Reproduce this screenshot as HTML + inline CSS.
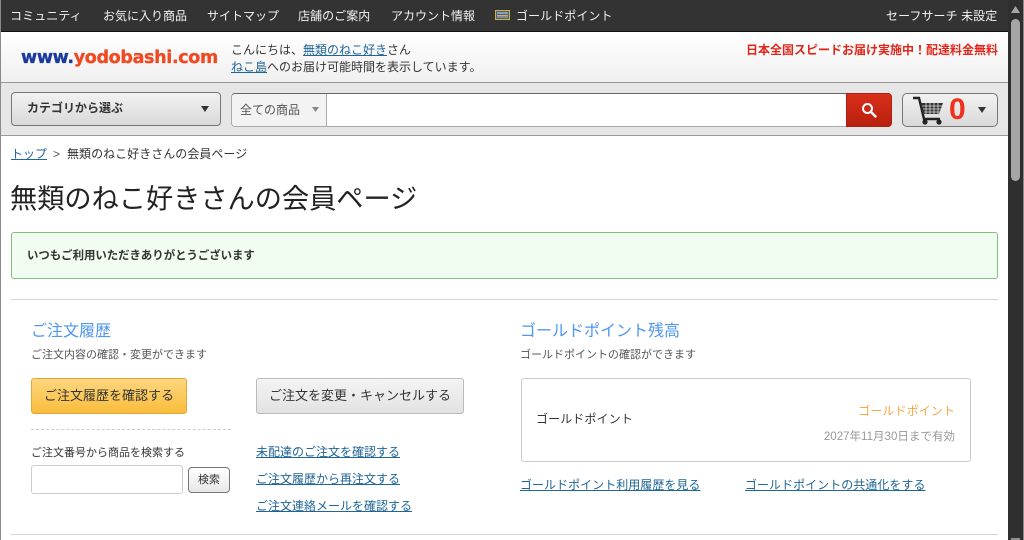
<!DOCTYPE html>
<html lang="ja"><head><meta charset="utf-8"><title>会員ページ</title>
<style>
*{box-sizing:border-box}
html,body{margin:0;padding:0}
body{width:1024px;height:540px;overflow:hidden;position:relative;background:#fff;font-family:"Liberation Sans","Noto Sans CJK JP",sans-serif;font-size:12px;color:#333}
.a{position:absolute;white-space:nowrap;line-height:18px}
a,.l{color:#1f6596;text-decoration:underline}
.nav{color:#f2f2f2;font-size:12px;top:7px}
</style></head><body>
<div class="a" style="left:0;top:0;width:1px;height:540px;background:#8a8a8a;z-index:5"></div>
<!-- top bar -->
<div class="a" style="left:0;top:0;width:1008px;height:32px;background:#333;border-bottom:1px solid #111"></div>
<div class="a nav" style="left:10px;letter-spacing:.1px">コミュニティ</div>
<div class="a nav" style="left:103px">お気に入り商品</div>
<div class="a nav" style="left:207px">サイトマップ</div>
<div class="a nav" style="left:298px;letter-spacing:.05px">店舗のご案内</div>
<div class="a nav" style="left:391px">アカウント情報</div>
<svg class="a" style="left:495px;top:10px" width="15" height="10"><rect x=".5" y=".5" width="14" height="9" fill="#55606f" stroke="#d2b23f"/><rect x="2" y="2" width="11" height="2" fill="#7f9fd0"/><rect x="2" y="5" width="11" height="1.5" fill="#cdb56a"/><rect x="2" y="7" width="11" height="1" fill="#6f88b8"/></svg>
<div class="a nav" style="left:516px;letter-spacing:.07px">ゴールドポイント</div>
<div class="a nav" style="left:886px;letter-spacing:.07px">セーフサーチ 未設定</div>
<!-- header -->
<div class="a" style="left:1px;top:32px;width:1007px;height:51px;background:linear-gradient(#fff,#f0f0f0);border-bottom:1px solid #9a9a9a"></div>
<div class="a" style="left:21px;top:47px;font:bold 17.5px/22px 'DejaVu Sans',sans-serif;letter-spacing:-.33px;color:#f04a23;-webkit-text-stroke:.35px"><span style="color:#1a3a9c">www.</span>yodobashi.com</div>
<div class="a" style="left:231px;top:41px">こんにちは、<a>無類のねこ好き</a>さん</div>
<div class="a" style="left:231px;top:58px"><a>ねこ島</a>へのお届け可能時間を表示しています。</div>
<div class="a" style="right:26px;top:41px;color:#e0261a;font-weight:bold">日本全国スピードお届け実施中！配達料金無料</div>
<!-- search bar -->
<div class="a" style="left:1px;top:83px;width:1007px;height:53px;background:#e6e6e6;border-bottom:1px solid #9a9a9a"></div>
<div class="a" style="left:11px;top:92px;width:210px;height:34px;border:1px solid #777;border-radius:4px;background:linear-gradient(#f2f2f2,#d9d9d9)"></div>
<div class="a" style="left:27px;top:99px;font-weight:bold;color:#333">カテゴリから選ぶ</div>
<svg class="a" style="left:201px;top:106px" width="8" height="6"><path d="M0 0H8L4 6Z" fill="#333"/></svg>
<div class="a" style="left:231px;top:93px;width:616px;height:34px;background:#fff;border:1px solid #aaa;border-top:1px solid #666;border-right:0;border-radius:4px 0 0 4px"></div>
<div class="a" style="left:232px;top:94px;width:95px;height:32px;background:#f3f3f3;border-right:1px solid #aaa;border-radius:4px 0 0 4px"></div>
<div class="a" style="left:240px;top:101px;color:#555">全ての商品</div>
<svg class="a" style="left:312px;top:107px" width="7" height="5"><path d="M0 0H7L3.5 5Z" fill="#888"/></svg>
<div class="a" style="left:846px;top:93px;width:46px;height:34px;border:1px solid #a8200f;border-radius:0 4px 4px 0;background:linear-gradient(#d9301a,#b8200e)"></div>
<svg class="a" style="left:860px;top:101px" width="18" height="18"><circle cx="7.5" cy="7.5" r="4.5" fill="none" stroke="#fff" stroke-width="2"/><path d="M11 11L15.5 15.5" stroke="#fff" stroke-width="2.4" stroke-linecap="round"/></svg>
<div class="a" style="left:902px;top:93px;width:96px;height:34px;border:1px solid #777;border-radius:5px;background:linear-gradient(#f2f2f2,#d9d9d9)"></div>
<svg class="a" style="left:912px;top:96px" width="34" height="29"><path d="M1 2H7L12 23H28" fill="none" stroke="#222" stroke-width="2.4"/><path d="M9 7H31L27 18H11Z" fill="#333"/><path d="M10 10H30M11 13H29M12 16H28M14 7V18M18 7V18M22 7V18M26 7V18" stroke="#ddd" stroke-width=".8"/><circle cx="13" cy="26" r="2.6" fill="#222"/><circle cx="27" cy="26" r="2.6" fill="#222"/></svg>
<div class="a" style="left:949px;top:94px;font:bold 30px/32px 'Liberation Sans',sans-serif;color:#f0301a">0</div>
<svg class="a" style="left:978px;top:107px" width="8" height="6"><path d="M0 0H8L4 6Z" fill="#333"/></svg>
<!-- scrollbar -->
<div class="a" style="left:1008px;top:0;width:16px;height:540px;background:#2f2f2f;border-right:1px solid #8a8a8a"></div>
<svg class="a" style="left:1011px;top:6px" width="9" height="7"><path d="M0 7L4.5 0L9 7Z" fill="#a6a6a6"/></svg>
<div class="a" style="left:1011px;top:19px;width:9px;height:162px;background:#a6a6a6;border-radius:5px"></div>
<div class="a" style="left:1011px;top:538px;width:9px;height:2px;background:#8f8f8f"></div>
<!-- breadcrumb -->
<div class="a" style="left:11px;top:145px"><a>トップ</a><span style="margin:0 7px 0 6px;color:#555">&gt;</span><span style="letter-spacing:.03px">無類のねこ好きさんの会員ページ</span></div>
<div class="a" style="left:10px;top:181px;font-size:27.2px;line-height:36px;color:#222">無類のねこ好きさんの会員ページ</div>
<!-- message -->
<div class="a" style="left:11px;top:232px;width:987px;height:47px;background:#f0fdf0;border:1px solid #7fc27a;border-radius:3px"></div>
<div class="a" style="left:27px;top:247px;font-size:11.4px;font-weight:bold;color:#333">いつもご利用いただきありがとうございます</div>
<div class="a" style="left:11px;top:299px;width:987px;height:1px;background:#d4d4d4"></div>
<!-- left column -->
<div class="a" style="left:31px;top:323px;font-size:16px;line-height:18px;color:#4f97ef">ご注文履歴</div>
<div class="a" style="left:31px;top:346px;font-size:11px;color:#555">ご注文内容の確認・変更ができます</div>
<div class="a" style="left:31px;top:378px;width:156px;height:36px;border:1px solid #e0a83a;border-radius:3px;background:linear-gradient(#fdd67e,#f9bd3c);text-align:center;line-height:34px;font-size:13px;color:#333">ご注文履歴を確認する</div>
<div class="a" style="left:256px;top:378px;width:208px;height:36px;border:1px solid #bbb;border-radius:3px;background:linear-gradient(#f4f4f4,#e2e2e2);text-align:center;line-height:34px;font-size:13px;color:#333">ご注文を変更・キャンセルする</div>
<div class="a" style="left:31px;top:429px;width:200px;height:0;border-top:1px dashed #ccc"></div>
<div class="a" style="left:31px;top:444px;font-size:11px;color:#333">ご注文番号から商品を検索する</div>
<div class="a" style="left:31px;top:465px;width:152px;height:29px;border:1px solid #ccc;border-radius:3px;background:#fff"></div>
<div class="a" style="left:188px;top:467px;width:42px;height:26px;border:1px solid #777;border-radius:4px;background:linear-gradient(#fff,#e8e8e8);text-align:center;line-height:24px;font-size:11px;color:#333">検索</div>
<div class="a l" style="left:256px;top:443px">未配達のご注文を確認する</div>
<div class="a l" style="left:256px;top:470px">ご注文履歴から再注文する</div>
<div class="a l" style="left:256px;top:497px">ご注文連絡メールを確認する</div>
<!-- right column -->
<div class="a" style="left:520px;top:323px;font-size:16px;line-height:18px;color:#4f97ef">ゴールドポイント残高</div>
<div class="a" style="left:520px;top:346px;font-size:11px;color:#555">ゴールドポイントの確認ができます</div>
<div class="a" style="left:521px;top:378px;width:450px;height:84px;border:1px solid #ccc;border-radius:3px"></div>
<div class="a" style="left:536px;top:410px;color:#333;letter-spacing:.1px">ゴールドポイント</div>
<div class="a" style="right:69px;top:402px;color:#f4a742;letter-spacing:.1px">ゴールドポイント</div>
<div class="a" style="right:69px;top:428px;font-size:11.5px;color:#999;letter-spacing:.02px">2027年11月30日まで有効</div>
<div class="a l" style="left:520px;top:476px;letter-spacing:.03px">ゴールドポイント利用履歴を見る</div>
<div class="a l" style="left:745px;top:476px;letter-spacing:.03px">ゴールドポイントの共通化をする</div>
<div class="a" style="left:11px;top:534px;width:987px;height:1px;background:#d4d4d4"></div>
</body></html>
